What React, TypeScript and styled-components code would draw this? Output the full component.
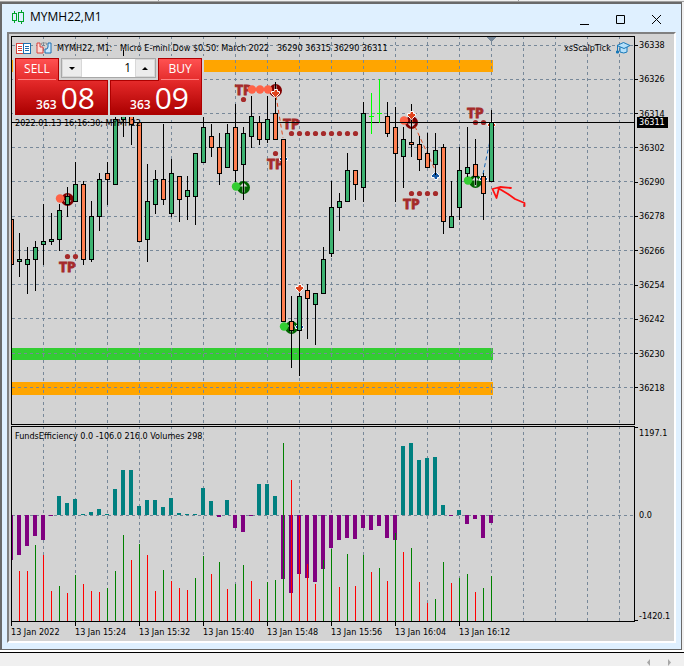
import React from "react";
import styled, { createGlobalStyle } from "styled-components";

const GlobalStyle = createGlobalStyle`
  *, *::before, *::after { box-sizing: border-box; }
  html, body { margin: 0; background: #f0f0f0; }
  body { font-family: "DejaVu Sans Condensed", "DejaVu Sans", sans-serif; font-size: 9px; line-height: 12px; color: #000; }
  button, input { font: inherit; color: inherit; margin: 0; padding: 0; border: 0; border-radius: 0; }
  svg { display: block; }
`;

const UI_FONT = `"Open Sans", "Noto Sans", sans-serif`;
const SURFACE = "#d3d3d3";
const GRID = "#778899";

/* ---------- data ---------- */

type Kind = "up" | "down";
/* wick top, wick bottom, body top, body bottom, direction */
type Candle = [number, number, number, number, Kind] | null;

const U: Kind = "up";
const D: Kind = "down";

const candles: Candle[] = [
  [219, 265, 219, 265, D], [233, 277, 259, 262, U], [247, 294, 259, 265, U], [241, 291, 247, 260, U],
  [204, 265, 241, 245, U], [213, 245, 239, 242, U], [204, 251, 210, 240, U], [187, 217, 196, 205, U],
  [162, 202, 184, 202, U], [181, 265, 184, 260, D], [201, 262, 216, 260, U], [173, 231, 179, 217, U],
  [162, 205, 173, 180, D], [100, 185, 119, 185, U], [50, 137, 110, 120, U], [100, 145, 110, 125, D],
  [122, 242, 122, 242, D], [164, 262, 201, 240, U], [170, 214, 179, 205, U], [124, 205, 179, 200, D],
  [159, 217, 173, 214, U], [176, 222, 176, 200, D], [176, 220, 190, 197, U], [153, 225, 153, 197, U],
  [117, 163, 127, 163, U], [124, 157, 136, 148, D], [133, 185, 147, 174, D], [124, 168, 133, 168, U],
  [104, 182, 127, 171, D], [127, 200, 133, 165, U], [96, 148, 116, 137, U], [116, 145, 122, 140, D],
  [96, 143, 119, 140, U], [82, 140, 113, 140, D], [139, 322, 139, 322, D], [296, 368, 321, 331, D],
  [284, 376, 296, 331, U], [284, 339, 290, 299, D], [293, 345, 293, 305, U], [247, 294, 259, 294, U],
  [181, 257, 207, 254, U], [193, 231, 201, 208, U], [153, 202, 170, 202, U], [170, 200, 170, 185, D],
  [102, 202, 113, 188, U], null, null, [102, 137, 116, 134, D],
  [107, 202, 127, 154, D], [127, 188, 139, 157, U], [104, 157, 142, 145, D], [136, 171, 144, 160, D],
  [133, 168, 153, 168, D], [133, 175, 150, 165, U], [144, 234, 147, 222, D], [181, 228, 216, 228, U],
  [147, 220, 170, 208, U], [127, 177, 167, 174, U], [139, 185, 164, 177, D], [173, 220, 176, 194, D],
  [110, 182, 122, 182, U],
];

const efficiency = [
  560, 555, 546, 536, 540, 516, 496, 503, 499, 514, 512, 509, 514, 489, 470, 470, 506, 500, 500, 507,
  498, 513, 514, 514, 488, 501, 517, 500, 528, 532, 516, 484, 484, 496, 579, 593, 574, 578, 582, 569,
  548, 540, 538, 539, 528, 530, 526, 538, 540, 446, 443, 460, 458, 457, 505, 516, 510, 524, 519, 538, 523,
];

const volumes = (
  "- R571 R571 G545 R555 R591 G586 R593 G575 R584 R591 R592 G588 G571 G535 R560 G544 R555 R591 G570 " +
  "R581 R588 R590 G578 G556 R574 G562 R589 G584 G565 R581 R599 G582 G580 G443 R480 R516 R564 R584 G560 " +
  "G549 R587 G554 R586 G555 R572 G568 R581 G533 R552 G548 R582 R603 G599 G562 R583 G578 G574 R592 G588 G576"
).split(" ");

const prices = [36338, 36326, 36314, 36302, 36290, 36278, 36266, 36254, 36242, 36230, 36218];
const priceLines = [45, 79, 113, 147, 181, 216, 250, 284, 318, 353, 387];
const times = ["2022", "15:24", "15:32", "15:40", "15:48", "15:56", "16:04", "16:12"];
const timeLines = Array.from({ length: 80 }, (_, i) => 43 + 32 * i);
const barX = (i: number) => 11 + 8 * i;

const targets = [[59, 272], [235, 95], [283, 129], [267, 169], [403, 209], [467, 118]];
const targetDots = [
  [67, 256], [75, 256], [243, 99], [275, 153],
  ...Array.from({ length: 9 }, (_, i) => [291 + 8 * i, 133]),
  [411, 193], [419, 193], [427, 193], [435, 193], [475, 122], [483, 122],
];
const sellDots = [[60, 198], [252, 89], [260, 89], [268, 89], [404, 120]];
const buyDots = [[236, 186], [284, 326], [468, 180]];

/* ---------- window chrome ---------- */

const Page = styled.div`
  display: flex;
  flex-direction: column;
  min-height: 100vh;
  overflow: hidden;
`;
const TopStrip = styled.div`
  height: 2px;
  display: grid;
  grid-template-columns: 159px 360px 1fr;
  border-bottom: 1px solid #a0a0a0;
  span { border-right: 1px solid #a0a0a0; }
`;
const Window = styled.section`
  margin-right: 2px;
  background: #dff0ff;
  border: 2px solid #696969;
  border-width: 2px 1px 1px 2px;
`;
const TitleBar = styled.header`
  height: 28px;
  display: flex;
  align-items: center;
  justify-content: space-between;
  padding: 0 9px 2px;
`;
const Title = styled.h1`
  margin: 0;
  display: flex;
  align-items: center;
  gap: 5px;
  font: 400 12px/20px ${UI_FONT};
`;
const Controls = styled.div`
  display: flex;
  gap: 4px;
  padding-top: 4px;
`;
const WindowButton = styled.button`
  width: 32px;
  height: 20px;
  display: grid;
  place-items: center;
  background: transparent;
`;
const Sunken = styled.main`
  margin: 0 5px 6px;
  padding: 2px 0 0 2px;
  background: ${SURFACE};
  border: 2px solid;
  border-color: #808080 #fff #fff #808080;
`;
const Board = styled.div`
  display: grid;
  grid-template-columns: minmax(0, 1fr) 39px;
  row-gap: 1px;
`;
const Pane = styled.div`
  position: relative;
  min-width: 0;
  border: 1px solid #000;
  overflow: hidden;
`;
const Overlay = styled.div`
  position: absolute;
  inset: 0;
  display: flex;
  flex-direction: column;
  align-items: flex-start;
`;

/* ---------- chart captions ---------- */

const Caption = styled.div`
  align-self: stretch;
  height: 19px;
  display: flex;
  align-items: center;
  gap: 5px;
  padding: 3px 3px 0 4px;
  white-space: pre;
`;
const Expert = styled.span`
  margin-left: auto;
  display: flex;
  align-items: center;
  gap: 5px;
`;
const Stamp = styled.div`
  padding-left: 3px;
  white-space: pre;
`;
const PaneLabel = styled.div`
  padding: 3px;
`;

/* ---------- one-click trading ---------- */

const TradePanel = styled.form`
  margin-left: 1px;
  padding: 2px;
  background: ${SURFACE};
  display: grid;
  grid-template-columns: 44px 49px 2px 48px 44px;
  grid-template-rows: 22px 35px;
`;
const Quote = styled.button<{ $side: "left" | "right" }>`
  --edge: ${(p) =>
    p.$side === "left"
      ? "polygon(0 0, 44px 0, 44px 22px, 100% 22px, 100% 100%, 0 100%)"
      : "polygon(100% 0, calc(100% - 44px) 0, calc(100% - 44px) 22px, 0 22px, 0 100%, 100% 100%)"};
  --face: ${(p) =>
    p.$side === "left"
      ? "polygon(0 0, 42px 0, 42px 22px, 100% 22px, 100% 100%, 0 100%)"
      : "polygon(100% 0, calc(100% - 42px) 0, calc(100% - 42px) 22px, 0 22px, 0 100%, 100% 100%)"};
  grid-row: 1 / 3;
  grid-column: ${(p) => (p.$side === "left" ? "1 / 3" : "4 / 6")};
  position: relative;
  isolation: isolate;
  display: flex;
  flex-direction: column;
  color: #fff;
  background: #ae0000;
  clip-path: var(--edge);
  font-family: ${UI_FONT};
  &::before {
    content: "";
    position: absolute;
    z-index: -1;
    inset: 1px;
    background: linear-gradient(#ff5151, #e02626 45%, #ab0000);
    clip-path: var(--face);
  }
`;
const Side = styled.span<{ $side: "left" | "right" }>`
  align-self: ${(p) => (p.$side === "left" ? "flex-start" : "flex-end")};
  width: 38px;
  height: 22px;
  margin: 0 3px;
  border-bottom: 1px solid #ff8080;
  font-size: 12px;
  line-height: 22px;
  text-align: center;
`;
const Price = styled.span`
  display: flex;
  align-items: baseline;
  justify-content: flex-end;
  gap: 4px;
  align-self: stretch;
  padding-right: 13px;
  font-size: 30px;
  line-height: 35px;
  b { font-size: 12px; font-weight: 600; }
`;
const Spinner = styled.div`
  grid-row: 1;
  grid-column: 2 / 5;
  height: 20px;
  margin: 0 2px;
  display: grid;
  grid-template-columns: 20px minmax(0, 1fr) 20px;
  border: 1px solid #a8a8a8;
  background: #fff;
`;
const Step = styled.button`
  display: grid;
  place-items: center;
  background: #ececec;
  border: 1px solid #d8d8d8;
`;
const Lots = styled.input`
  min-width: 0;
  padding-right: 4px;
  background: #fff;
  text-align: right;
  font: 400 12px/18px ${UI_FONT};
  outline: 0;
`;

/* ---------- axes ---------- */

const PriceAxis = styled.div`
  position: relative;
  display: flex;
  flex-direction: column;
  justify-content: space-between;
  padding: 3px 0 31px;
`;
const Tick = styled.span`
  display: flex;
  align-items: center;
  gap: 1px;
  &::before { content: ""; width: 3px; height: 1px; background: #000; }
`;
const LastPrice = styled.strong`
  position: absolute;
  left: 2px;
  top: 81px;
  width: 31px;
  padding-left: 2px;
  line-height: 11px;
  font-weight: 400;
  color: #fff;
  background: #000;
`;
const RangeAxis = styled.div`
  display: grid;
  grid-template-rows: 82px minmax(0, 1fr) auto;
`;
const RangeLabel = styled.span<{ $tick?: "top" | "bottom" }>`
  position: relative;
  padding: 1px 0 0 4px;
  &::before {
    content: "";
    position: absolute;
    left: 0;
    width: 3px;
    height: ${(p) => (p.$tick ? "1px" : "0")};
    ${(p) => (p.$tick === "bottom" ? "bottom: 1px;" : "top: 1px;")}
    background: #000;
  }
`;
const TimeAxis = styled.div`
  grid-column: 1 / 3;
  height: 19px;
  margin-top: -1px;
  display: grid;
  grid-template-columns: repeat(8, 64px);
  overflow: hidden;
`;
const Time = styled.span`
  position: relative;
  padding-top: 4px;
  white-space: nowrap;
  &::before {
    content: "";
    position: absolute;
    left: 0;
    top: 0;
    width: 1px;
    height: 4px;
    background: #000;
  }
`;
const StatusBar = styled.footer`
  flex: 1;
  margin-top: 2px;
  border-top: 1px solid #000;
  box-shadow: 0 -2px #fff;
  display: flex;
  justify-content: flex-end;
  align-items: flex-end;
  gap: 12px;
  padding-right: 11px;
`;
const Scroll = styled.button`
  width: 8px;
  height: 8px;
  background: transparent;
`;

/* ---------- drawings ---------- */

const Grid = ({ rows }: { rows: number[] }) => (
  <g stroke={GRID} strokeDasharray="3 3">
    {timeLines.map((x) => <line key={x} x1={x + 0.5} x2={x + 0.5} y1="36" y2="640" />)}
    {rows.map((y) => <line key={y} x1="12" x2="2700" y1={y + 0.5} y2={y + 0.5} />)}
  </g>
);

const SmallArrow = ({ x, y, color, down }: { x: number; y: number; color: string; down?: boolean }) => (
  <g transform={`translate(${x} ${y})${down ? " scale(1 -1)" : ""}`}>
    <path d="M0-4 1-3 4 0V2H2V4H-1V2H-4V0L-1-3Z" fill={color} stroke="#fff" strokeWidth="1" />
    <path d="M0-3 3 1H1V3H-1V1H-3Z" fill={color} />
  </g>
);

const Signal = ({ x, y, color, down }: { x: number; y: number; color: string; down?: boolean }) => (
  <g transform={`translate(${x} ${y})${down ? " scale(1 -1)" : ""}`}>
    <circle r="6.5" fill={color} />
    <path d="M-1 5V-1H-4L0-5 4-1H1V5Z" fill={SURFACE} />
  </g>
);

const PriceChart = () => (
  <svg width="100%" height="387" aria-label="Price chart" role="img">
    <g transform="translate(-12 -37)" shapeRendering="crispEdges">
      <rect x="11" y="60" width="482" height="12" fill="#ffa500" />
      <rect x="11" y="348" width="482" height="12" fill="#32cd32" />
      <rect x="11" y="382" width="482" height="13" fill="#ffa500" />
      <Grid rows={priceLines} />
      <path d="M487 37H496L491.500 42Z" fill={GRID} />
      <g shapeRendering="auto">
        {targetDots.map(([x, y]) => <circle key={`${x}-${y}`} cx={x + 0.5} cy={y + 0.5} r="2.600" fill="#a52a2a" />)}
        <g fill="#a52a2a" stroke="#a52a2a" strokeWidth="0.800" fontSize="14" fontWeight="700" fontFamily="Noto Sans, sans-serif">
          {targets.map(([x, y]) => <text key={`${x}-${y}`} x={x} y={y}>TP</text>)}
        </g>
        <Signal x={67.5} y={199.5} color="#800000" down />
        <Signal x={275.5} y={90.5} color="#800000" down />
        <Signal x={411.5} y={122.5} color="#800000" down />
        <Signal x={243.5} y={187.5} color="#006400" />
        <Signal x={291.5} y={327.5} color="#006400" />
        <Signal x={475.5} y={181.5} color="#006400" />
        {sellDots.map(([x, y]) => <circle key={x} cx={x} cy={y + 0.5} r="4.200" fill="#ff6347" />)}
        {buyDots.map(([x, y]) => <circle key={x} cx={x} cy={y + 0.5} r="4.200" fill="#32cd32" />)}
        <g fill="none" strokeDasharray="4 3">
          <path d="M276 96 283 138M412 120 435 170" stroke="#e04a20" />
          <path d="M483 174 491 136" stroke="#1464b4" />
        </g>
        <SmallArrow x={283.5} y={158.500} color="#1459a5" />
        <SmallArrow x={299.5} y={326.500} color="#1459a5" />
        <SmallArrow x={483.5} y={178.500} color="#1459a5" />
        <SmallArrow x={435.5} y={175.500} color="#1459a5" />
        <SmallArrow x={491.5} y={125.500} color="#e0431c" down />
      </g>
      <rect x="12" y="122" width="2700" height="1" />
      {candles.map((c, i) => {
        if (!c) return null;
        const [hi, lo, top, bottom, kind] = c;
        const x = barX(i);
        return (
          <g key={i}>
            <rect x={x} y={hi} width="1" height={lo - hi} />
            <rect x={x - 2} y={top} width="5" height={bottom - top} />
            <rect x={x - 1} y={top + 1} width="3" height={bottom - top - 2} fill={kind === U ? "#3cb371" : "#ff7f50"} />
          </g>
        );
      })}
      <path d="M371 93h1v41h-1zM369 116h5v1h-5zM379 79h1v44h-1zM377 113h5v1h-5z" fill="#00ff00" />
      <g shapeRendering="auto">
        <SmallArrow x={275.5} y={93.500} color="#e0431c" down />
        <SmallArrow x={411.5} y={115.500} color="#e0431c" down />
        <SmallArrow x={299.5} y={288.500} color="#e0431c" down />
        <path
          d="M524.500 206V203L515 199 508 194 498 188M511 188 500 187 492.500 189 496.500 198 499 188"
          fill="none" stroke="#ff1010" strokeWidth="1.800" strokeLinejoin="round" strokeLinecap="round"
        />
      </g>
    </g>
  </svg>
);

const EfficiencyChart = () => (
  <svg width="100%" height="194" aria-label="FundsEfficiency and volumes" role="img">
    <g transform="translate(-12 -427)" shapeRendering="crispEdges">
      <Grid rows={[515]} />
      {efficiency.map((y, i) => (
        <rect
          key={i} x={barX(i) - 2} width="4"
          y={y > 515 ? 515 : y} height={Math.abs(515 - y)}
          fill={y > 515 ? "#800080" : "#008080"}
        />
      ))}
      {volumes.map((v, i) => {
        if (v === "-") return null;
        const y = Number(v.slice(1));
        return <rect key={i} x={barX(i)} y={y} width="1" height={621 - y} fill={v[0] === "R" ? "#ff0000" : "#008000"} />;
      })}
    </g>
  </svg>
);

const CandlesIcon = () => (
  <svg width="14" height="16" fill="none" stroke="#00a32a" shapeRendering="crispEdges">
    <path d="M1.500 4.500h4v7h-4zM3.500 2v2M3.500 12v2M7.500 3.500h5v9h-5zM10 1v2M10 13v2" />
  </svg>
);
const DepthIcon = () => (
  <svg width="15" height="11" fill="#fff" shapeRendering="crispEdges">
    <path d="M0.500 0.500h7v10h-7z" stroke="#d8413a" />
    <path d="M7.500 0.500h7v10h-7z" stroke="#1c6fb0" />
    <path d="M2 3.500h4M2 5.500h4M2 7.500h4" stroke="#d8413a" />
    <path d="M9 3.500h4M9 5.500h4M9 7.500h4" stroke="#1c6fb0" />
  </svg>
);
const TradeIcon = () => (
  <svg width="16" height="12">
    <path d="M1 1h3v4h3v6h-6z" fill="#ffd9d4" stroke="#d8413a" />
    <path d="M15 1h-3v4l-1 2h-2v4h6z" fill="#cdeaff" stroke="#1c6fb0" />
    <path d="M5.500 3V1h5v2" fill="none" stroke="#999" />
  </svg>
);
const CapIcon = () => (
  <svg width="15" height="12" fill="#b5e0fa" stroke="#1878b8">
    <path d="M4 5v5q4 2 7 0V5" />
    <path d="M1 3.500 7.500 0.500 14 3.500 8 6.500Z" />
    <path d="M1.500 4v5" />
    <path d="M0.500 9h2v2h-2z" fill="#1878b8" />
  </svg>
);

export default function App() {
  return (
    <>
      <GlobalStyle />
      <Page>
        <TopStrip><span /><span /></TopStrip>
        <Window>
          <TitleBar>
            <Title><CandlesIcon />MYMH22,M1</Title>
            <Controls>
              <WindowButton aria-label="Minimize">
                <svg width="11" height="11"><path d="M1 10h9v1H1z" /></svg>
              </WindowButton>
              <WindowButton aria-label="Maximize">
                <svg width="11" height="11"><path d="M1.500 1.500h8v8h-8z" fill="none" stroke="#000" /></svg>
              </WindowButton>
              <WindowButton aria-label="Close">
                <svg width="11" height="11"><path d="M1 1 10 10M10 1 1 10" stroke="#000" /></svg>
              </WindowButton>
            </Controls>
          </TitleBar>
          <Sunken>
            <Board>
              <Pane>
                <PriceChart />
                <Overlay>
                  <Caption>
                    <DepthIcon />
                    <TradeIcon />
                    <span>{"MYMH22, M1:   Micro E-mini Dow $0.50: March 2022   36290 36315 36290 36311"}</span>
                    <Expert>xsScalpTick<CapIcon /></Expert>
                  </Caption>
                  <TradePanel onSubmit={(e) => e.preventDefault()}>
                    <Quote type="button" $side="left">
                      <Side $side="left">SELL</Side>
                      <Price><b>363</b>08</Price>
                    </Quote>
                    <Spinner>
                      <Step type="button" aria-label="Decrease volume">
                        <svg width="6" height="3"><path d="M0 0h6L3 3z" /></svg>
                      </Step>
                      <Lots aria-label="Volume" defaultValue="1" />
                      <Step type="button" aria-label="Increase volume">
                        <svg width="6" height="3"><path d="M0 3h6L3 0z" /></svg>
                      </Step>
                    </Spinner>
                    <Quote type="button" $side="right">
                      <Side $side="right">BUY</Side>
                      <Price><b>363</b>09</Price>
                    </Quote>
                  </TradePanel>
                  <Stamp>2022.01.13 16:16:30; MYMH22</Stamp>
                </Overlay>
              </Pane>
              <PriceAxis>
                {prices.map((p) => <Tick key={p}>{p}</Tick>)}
                <LastPrice>36311</LastPrice>
              </PriceAxis>
              <Pane>
                <EfficiencyChart />
                <Overlay>
                  <PaneLabel>FundsEfficiency 0.0 -106.0 216.0 Volumes 298</PaneLabel>
                </Overlay>
              </Pane>
              <RangeAxis>
                <RangeLabel $tick="top">1197.1</RangeLabel>
                <RangeLabel>0.0</RangeLabel>
                <RangeLabel $tick="bottom">-1420.1</RangeLabel>
              </RangeAxis>
              <TimeAxis>
                {times.map((t) => <Time key={t}>13 Jan {t}</Time>)}
              </TimeAxis>
            </Board>
          </Sunken>
        </Window>
        <StatusBar>
          <Scroll aria-label="Scroll left"><svg width="8" height="8"><path d="M5 1v7L2 4.500z" fill="#a8a8a8" /></svg></Scroll>
          <Scroll aria-label="Scroll right"><svg width="8" height="8"><path d="M3 1v7l3-3.500z" fill="#a8a8a8" /></svg></Scroll>
        </StatusBar>
      </Page>
    </>
  );
}
